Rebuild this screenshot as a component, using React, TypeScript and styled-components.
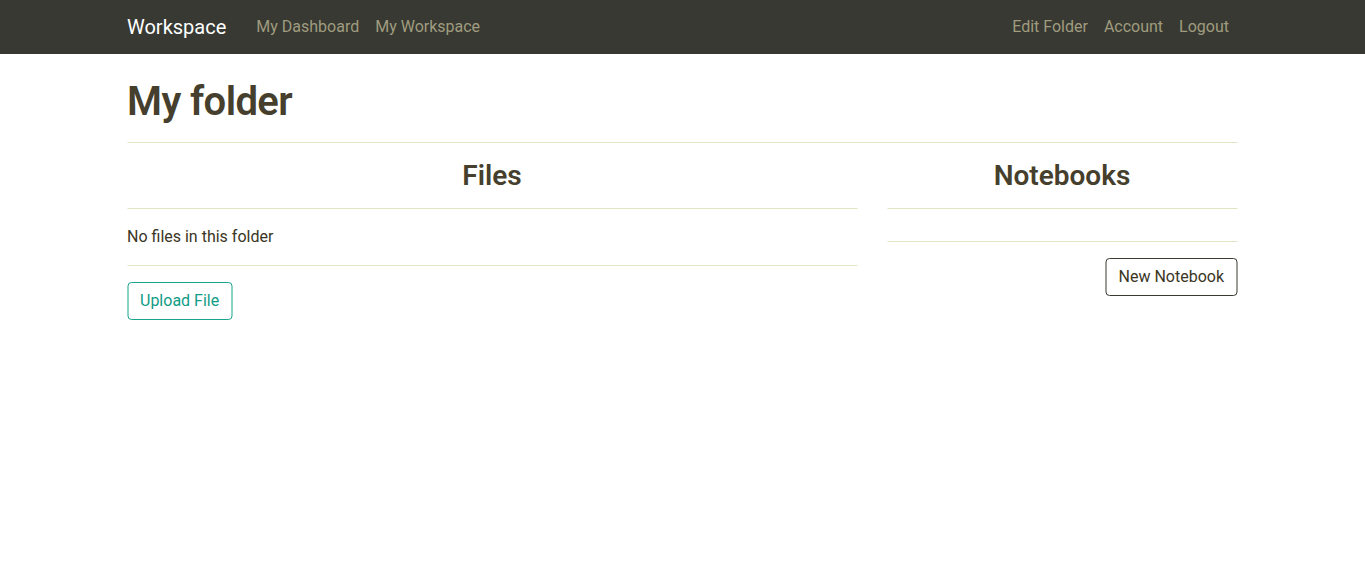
import React from "react";
import styled, { createGlobalStyle } from "styled-components";

const GlobalStyle = createGlobalStyle`
  html, body {
    margin: 0;
    padding: 0;
    background: #fff;
    font-family: Roboto, "Liberation Sans", sans-serif;
    font-size: 16px;
    line-height: 1.5;
    color: #3b3524;
  }
  * { box-sizing: border-box; }
`;

const Navbar = styled.nav`
  height: 54px;
  background: #373932;
  display: flex;
  align-items: center;
`;

const Container = styled.div`
  width: 1140px;
  margin: 0 auto;
  padding: 0 15px;
  transform: translateX(-0.5px);
`;

const NavInner = styled(Container)`
  display: flex;
  align-items: center;
`;

const Brand = styled.a`
  color: #fff;
  font-size: 20px;
  margin-right: 22px;
  text-decoration: none;
`;

const NavList = styled.div<{ $right?: boolean }>`
  display: flex;
  margin-left: ${(p) => (p.$right ? "auto" : "0")};
`;

const NavLink = styled.a`
  color: #a09c7f;
  padding: 0 8px;
  text-decoration: none;
`;

const Title = styled.h1`
  font-size: 40px;
  font-weight: 600;
  letter-spacing: -0.6px;
  line-height: 1.2;
  color: #463f2d;
  margin: 24px 0 8px;
`;

const Rule = styled.hr`
  border: 0;
  border-top: 1px solid #e2e4c2;
  margin: 16px 0;
`;

const Row = styled.div`
  display: grid;
  grid-template-columns: 730px 350px;
  column-gap: 30px;
`;

const Column = styled.section`
  display: flex;
  flex-direction: column;
`;

const SectionTitle = styled.h3`
  font-size: 28px;
  font-weight: 600;
  line-height: 32px;
  color: #463f2d;
  text-align: center;
  margin: 1px 0 0;
`;

const Empty = styled.p`
  margin: 0;
`;

const Button = styled.button<{ $variant: "teal" | "dark" }>`
  align-self: ${(p) => (p.$variant === "dark" ? "flex-end" : "flex-start")};
  font-family: inherit;
  font-size: 16px;
  line-height: 1.5;
  padding: 6px 12px;
  border-radius: 4px;
  background: #fff;
  color: ${(p) => (p.$variant === "teal" ? "#109b86" : "#3b3524")};
  border: 1px solid ${(p) => (p.$variant === "teal" ? "#1aa48e" : "#3b3a30")};
  cursor: pointer;
`;

export default function App() {
  return (
    <>
      <GlobalStyle />
      <Navbar>
        <NavInner>
          <Brand href="#">Workspace</Brand>
          <NavList>
            <NavLink href="#">My Dashboard</NavLink>
            <NavLink href="#">My Workspace</NavLink>
          </NavList>
          <NavList $right>
            <NavLink href="#">Edit Folder</NavLink>
            <NavLink href="#">Account</NavLink>
            <NavLink href="#">Logout</NavLink>
          </NavList>
        </NavInner>
      </Navbar>
      <Container>
        <Title>My folder</Title>
        <Rule />
        <Row>
          <Column>
            <SectionTitle>Files</SectionTitle>
            <Rule />
            <Empty>No files in this folder</Empty>
            <Rule />
            <Button $variant="teal">Upload File</Button>
          </Column>
          <Column>
            <SectionTitle>Notebooks</SectionTitle>
            <Rule />
            <Rule />
            <Button $variant="dark">New Notebook</Button>
          </Column>
        </Row>
      </Container>
    </>
  );
}
